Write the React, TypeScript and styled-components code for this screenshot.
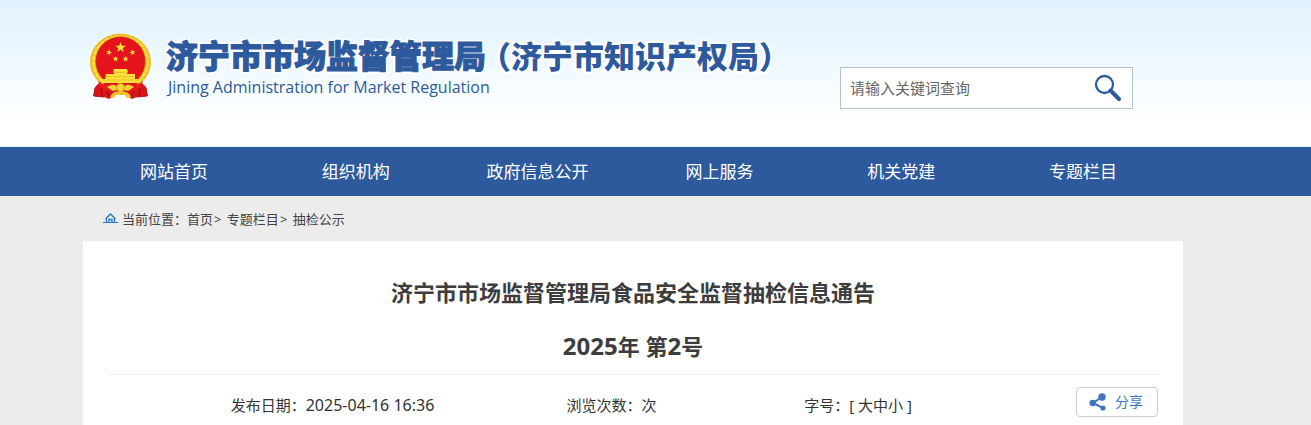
import React from "react";
import styled, { createGlobalStyle } from "styled-components";

const blue = "#2d5a9d";

const GlobalStyle = createGlobalStyle`
  * { box-sizing: border-box; }
  body {
    margin: 0;
    background: #ececec;
    color: #333;
    font-family: "Noto Sans", "Noto Sans CJK SC", sans-serif;
  }
  a { color: inherit; text-decoration: none; }
`;

const Header = styled.header`
  padding-right: 45px;
  background: linear-gradient(#e3f2ff 0, #e9f5ff 28%, #f8fdff 64%, #fff 90%);
  border-bottom: 1px solid #e8eef5;
`;

const Container = styled.div`
  width: 100%;
  max-width: 1100px;
  margin: 0 auto;
`;

const HeaderRow = styled(Container)`
  display: flex;
  justify-content: space-between;
  align-items: flex-start;
  padding: 32px 50px 37px 6px;
`;

const Brand = styled.a`
  display: flex;
  align-items: flex-start;
  gap: 14px;
  color: ${blue};
`;

const BrandName = styled.h1`
  display: flex;
  align-items: center;
  margin: 0;
  font-size: 32px;
  line-height: 48px;
  font-weight: 900;
  white-space: nowrap;
  -webkit-text-stroke: 1px ${blue};
  text-shadow: 0 0 2px #fff, 2px 2px 1px #fff, -2px -2px 1px #fff,
    2px -2px 1px #fff, -2px 2px 1px #fff;
`;

const BrandAlias = styled.span`
  margin-left: -6px;
  font-size: 31px;
  -webkit-text-stroke: 0;
`;

const BrandEnglish = styled.p`
  margin: 0;
  padding-left: 2px;
  font-family: "Open Sans", sans-serif;
  font-size: 16px;
  line-height: 14px;
`;

const SearchForm = styled.form`
  display: flex;
  align-items: center;
  width: 293px;
  height: 42px;
  margin-top: 35px;
  background: #fff;
  border: 1px solid #b5c1d6;
`;

const SearchInput = styled.input`
  flex: 1;
  min-width: 0;
  height: 40px;
  padding: 0 9px;
  border: 0;
  outline: 0;
  background: transparent;
  font: inherit;
  font-size: 15px;
  color: #666;
  &::placeholder { color: #666; opacity: 1; }
`;

const SearchButton = styled.button`
  display: flex;
  align-items: center;
  justify-content: center;
  width: 48px;
  height: 40px;
  padding: 0;
  border: 0;
  background: transparent;
  cursor: pointer;
`;

const Nav = styled.nav`
  padding-right: 45px;
  background: ${blue};
`;

const NavList = styled.ul`
  display: grid;
  grid-template-columns: repeat(6, 1fr);
  margin: 0;
  padding: 0 9px 0 0;
  list-style: none;
`;

const NavLink = styled.a`
  display: block;
  color: #fff;
  font-size: 17px;
  line-height: 49px;
  text-align: center;
`;

const Main = styled.main`
  padding-right: 45px;
`;

const Breadcrumb = styled.nav`
  display: flex;
  align-items: center;
  gap: 4px;
  height: 45px;
  padding-left: 20px;
  font-size: 13px;
  color: #444;
`;

const Trail = styled.span`
  line-height: 20px;
`;

const Separator = styled.span`
  margin: 0 2px 0 1px;
`;

const Article = styled.article`
  min-height: 184px;
  padding: 25px 25px 0;
  background: #fff;
`;

const Title = styled.h2`
  margin: 0;
  padding-bottom: 1px;
  font-size: 22px;
  line-height: 53px;
  color: #3d3d3d;
  text-align: center;
  border-bottom: 1px solid #ececec;
`;

const TitleNumber = styled.span`
  font-size: 24px;
`;

const Meta = styled.div`
  display: grid;
  grid-template-columns: 449fr 109fr 384fr 108fr;
  align-items: start;
  padding-top: 12px;
  font-size: 15px;
`;

const MetaItem = styled.span`
  line-height: 36px;
  text-align: center;
  white-space: nowrap;
`;

const MetaDate = styled.time`
  font-size: 16px;
`;

const SizeButton = styled.button`
  padding: 0;
  border: 0;
  background: none;
  font: inherit;
  color: inherit;
  cursor: pointer;
`;

const ShareButton = styled.button`
  display: flex;
  align-items: center;
  justify-self: end;
  gap: 8px;
  width: 82px;
  height: 30px;
  padding: 0 0 0 12px;
  border: 1px solid #ccc;
  border-radius: 4px;
  background: #fff;
  color: #3e75bd;
  font: inherit;
  font-size: 14px;
  line-height: 28px;
  cursor: pointer;
`;

const star = "M0-10 2.4-3.2 9.5-3.1 3.8 1.2 5.9 8.1 0 4-5.9 8.1-3.8 1.2-9.5-3.1-2.4-3.2Z";

const Emblem = () => (
  <svg width="63" height="69" viewBox="0 0 63 69" aria-hidden="true">
    <path d="M12 49 6 55 4 64 15 65 20 67 29 61 34 61 43 67 48 65 59 64 57 55 51 49Z" fill="#d9151b" />
    <path d="M12 56 13 64M17 55 20 65M51 56 50 64M46 55 43 65" stroke="#8d1416" fill="none" />
    <ellipse cx="31.500" cy="30" rx="30.500" ry="28.500" fill="#f3cb30" />
    <ellipse cx="31.500" cy="30" rx="29.500" ry="27.500" fill="none" stroke="#d9a01c" strokeWidth="0.800" strokeDasharray="3 2" />
    <ellipse cx="31.500" cy="30" rx="27" ry="25.500" fill="none" stroke="#ffe95a" strokeWidth="1.500" strokeDasharray="4 2" />
    <circle cx="31.500" cy="29.500" r="25" fill="#e5131b" stroke="#cf9316" strokeWidth="0.600" />
    <g fill="#ffdf38">
      <path d={star} transform="translate(31.500 15.500) scale(.56)" />
      <path d={star} transform="translate(20 20.500) scale(.32) rotate(15)" />
      <path d={star} transform="translate(43.500 20.500) scale(.32) rotate(-15)" />
      <path d={star} transform="translate(26.500 27) scale(.32) rotate(10)" />
      <path d={star} transform="translate(36.500 27) scale(.32) rotate(-10)" />
      <path d="M25 37H38L39 40H24ZM25 39H38V42H25ZM17 42H46V48H16ZM14 47H49V51H14Z" />
    </g>
    <path d="M24 40.500H39M17 44.500H46M14 48H49" stroke="#e5b226" strokeWidth="0.700" />
    <path d="M14 51H49L46 55H17Z" fill="#db171b" />
    <path d="M9 49Q18 56 25 53L31.500 51 38 53Q45 56 54 49L51 56Q43 62 35 57L31.500 62 28 57Q20 62 12 56Z" fill="#e51b1e" />
    <path d="M18 55Q24 51 27 54L31.500 51 36 54Q39 51 45 55L39 59 31.500 57 24 59Z" fill="#f6cf31" />
    <circle cx="31.500" cy="55.500" r="4" fill="#f8d737" stroke="#c98311" strokeWidth="0.800" />
    <path d="M21 65Q23 59 31.500 59T42 65L38 66 36 63H27L25 66Z" fill="#efc329" />
    <path d="M6 56 5 64 15 65M57 56 58 64 48 65" fill="none" stroke="#b51016" strokeWidth="1" />
  </svg>
);

const SearchIcon = () => (
  <svg width="28" height="28" viewBox="0 0 28 28" fill="none" stroke={blue} aria-hidden="true">
    <circle cx="10.500" cy="10.500" r="8.500" strokeWidth="2.300" />
    <path d="M16.500 16.500 25 25" strokeWidth="4" strokeLinecap="round" />
  </svg>
);

const HomeIcon = () => (
  <svg width="15" height="11" viewBox="0 0 15 11" fill="none" stroke="#1f76c9" aria-hidden="true">
    <path d="M0 9.500H15" strokeWidth="1" />
    <path d="M2.500 6 7.500 1 12.500 6M3.500 5.500V9.500M11.500 5.500V9.500M6 9.500V6.500H9V9.500" strokeWidth="1.300" />
  </svg>
);

const ShareIcon = () => (
  <svg width="18" height="18" viewBox="0 0 18 18" fill="#3e75bd" aria-hidden="true">
    <path d="M13 4 4 10 14 15" fill="none" stroke="#3e75bd" strokeWidth="2" />
    <circle cx="13" cy="4" r="3.700" />
    <circle cx="3.700" cy="10" r="3.200" />
    <circle cx="14" cy="15" r="2.600" />
  </svg>
);

const navItems = ["网站首页", "组织机构", "政府信息公开", "网上服务", "机关党建", "专题栏目"];

export default function App() {
  return (
    <>
      <GlobalStyle />
      <Header>
        <HeaderRow>
          <Brand href="#">
            <Emblem />
            <div>
              <BrandName>
                济宁市市场监督管理局<BrandAlias>（济宁市知识产权局）</BrandAlias>
              </BrandName>
              <BrandEnglish>Jining Administration for Market Regulation</BrandEnglish>
            </div>
          </Brand>
          <SearchForm role="search" onSubmit={(e) => e.preventDefault()}>
            <SearchInput type="text" aria-label="请输入关键词查询" placeholder="请输入关键词查询" />
            <SearchButton type="submit" aria-label="查询">
              <SearchIcon />
            </SearchButton>
          </SearchForm>
        </HeaderRow>
      </Header>
      <Nav>
        <Container>
          <NavList>
            {navItems.map((item) => (
              <li key={item}>
                <NavLink href="#">{item}</NavLink>
              </li>
            ))}
          </NavList>
        </Container>
      </Nav>
      <Main>
        <Container>
          <Breadcrumb>
            <HomeIcon />
            <Trail>
              当前位置：<a href="#">首页</a>
              <Separator>&gt;</Separator> <a href="#">专题栏目</a>
              <Separator>&gt;</Separator> <a href="#">抽检公示</a>
            </Trail>
          </Breadcrumb>
          <Article>
            <Title>
              济宁市市场监督管理局食品安全监督抽检信息通告
              <br />
              <TitleNumber>2025</TitleNumber>年 第<TitleNumber>2</TitleNumber>号
            </Title>
            <Meta>
              <MetaItem>
                发布日期：<MetaDate dateTime="2025-04-16T16:36">2025-04-16 16:36</MetaDate>
              </MetaItem>
              <MetaItem>浏览次数：次</MetaItem>
              <MetaItem>
                字号：[ <SizeButton>大</SizeButton>
                <SizeButton>中</SizeButton>
                <SizeButton>小</SizeButton> ]
              </MetaItem>
              <ShareButton type="button">
                <ShareIcon />
                分享
              </ShareButton>
            </Meta>
          </Article>
        </Container>
      </Main>
    </>
  );
}
